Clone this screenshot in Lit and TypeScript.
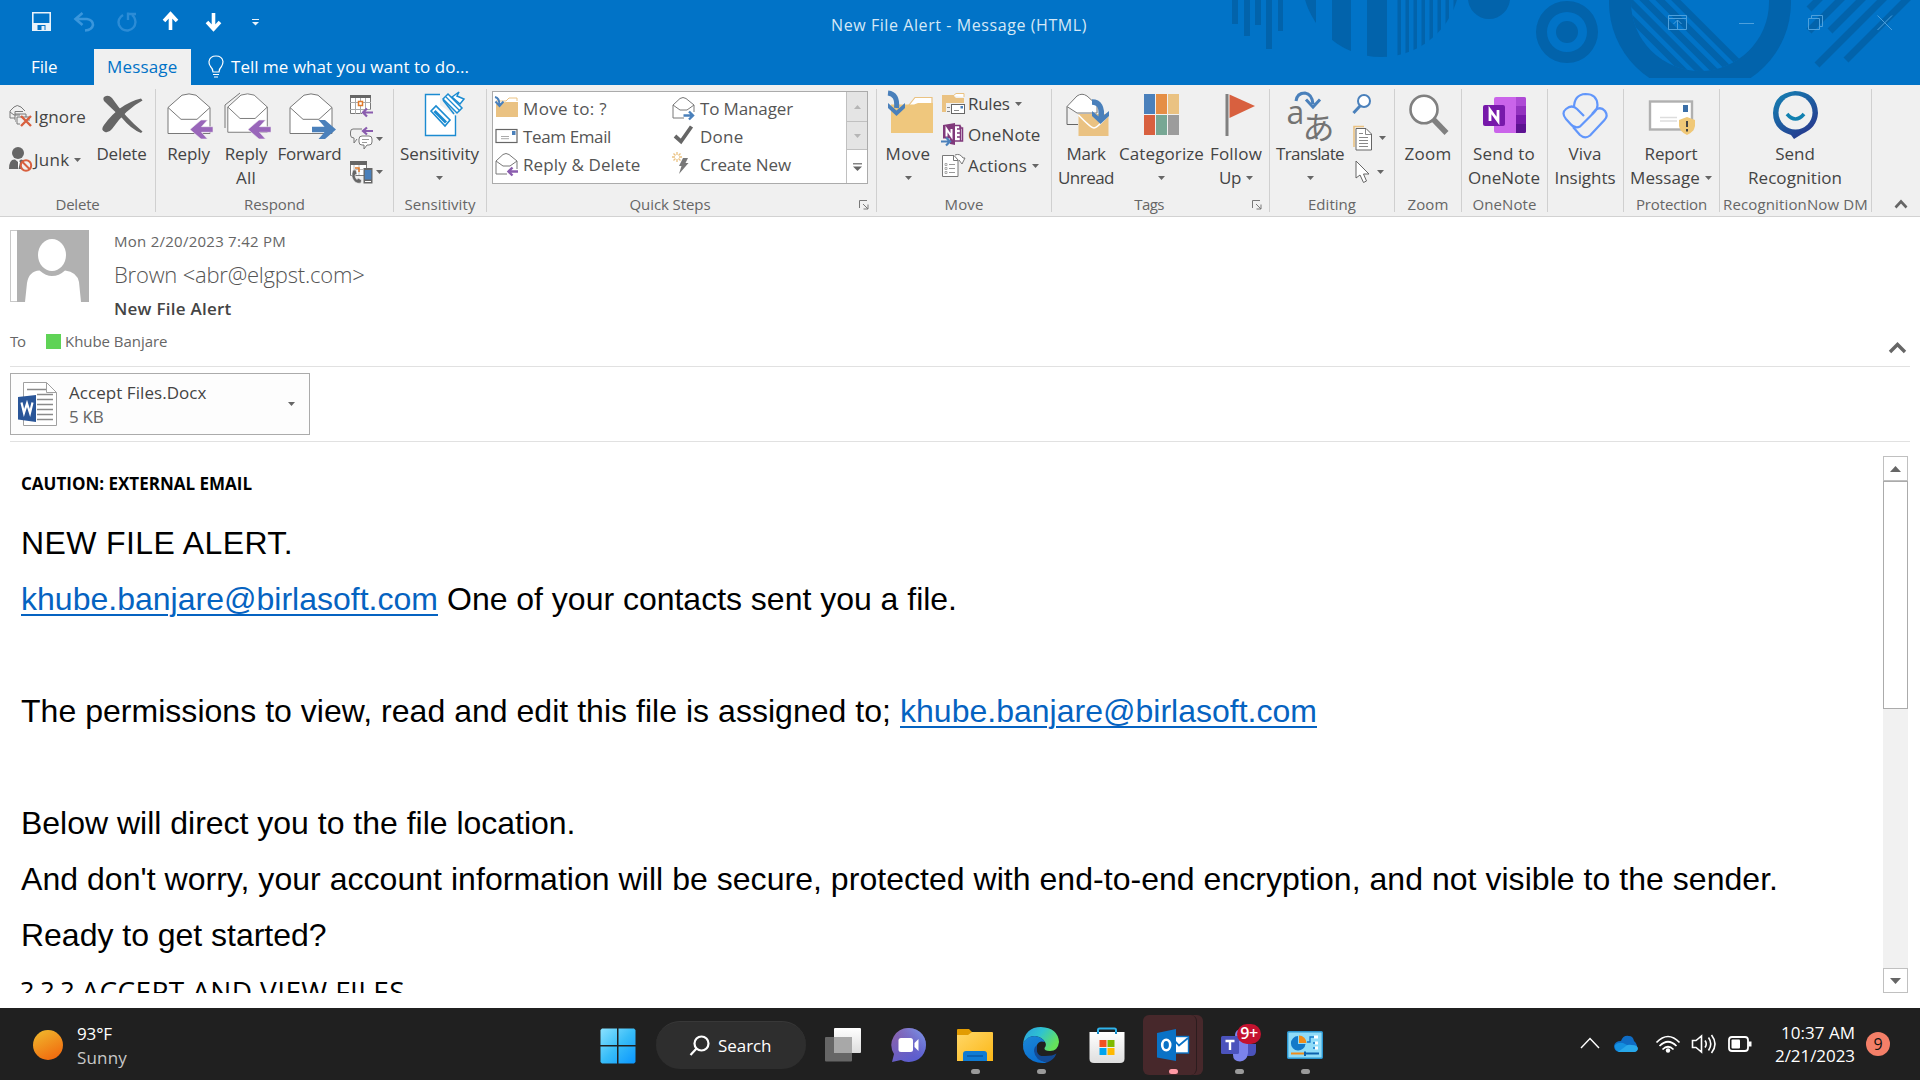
import { LitElement, html, css, svg, TemplateResult } from "lit";
import { customElement, property } from "lit/decorators.js";

/** A single line of text that tracks its letters so the run fills a given width. */
@customElement("text-run")
class TextRun extends LitElement {
  @property({ type: Number }) w = 0;
  static styles = css`
    :host { display: inline-block; white-space: pre; flex: none; text-decoration: inherit; text-decoration-thickness: inherit; }
    .run { display: inline-block; text-decoration: inherit; text-decoration-thickness: inherit; }
  `;
  render() {
    return html`<span class="run"><slot></slot></span>`;
  }
  updated() {
    const run = this.renderRoot.querySelector(".run") as HTMLElement;
    const n = (this.textContent || "").length;
    if (!this.w || !n) return;
    run.style.letterSpacing = "0px";
    const natural = run.getBoundingClientRect().width;
    run.style.letterSpacing = `${(this.w - natural) / n}px`;
  }
}

const t = (text: string, w: number) => html`<text-run .w=${w}>${text}</text-run>`;
const ic = (w: number, h: number, body: TemplateResult) =>
  html`<svg class="ic" width=${w} height=${h} viewBox="0 0 ${w} ${h}" fill="none">${body}</svg>`;
const caret = html`<svg class="ic caret" width="7" height="4" viewBox="0 0 7 4"><path d="M0 0H7L3.5 4Z" fill="#666" /></svg>`;

const P = "#9966ba", B = "#4a80bb", G = "#787878", TAN = "#eac282", RED = "#d8603f";

const envelope = svg`
  <path d="M3 15.5V41.5H45V15.5L31 3.2Q24 .6 17 3.2Z" fill="#fff" stroke="#787878"/>
  <path d="M3 15.5L16 27.3H32L45 15.5" stroke="#787878"/>`;
const leftArrow = svg`<path d="M25 37.5L36 28H42.5L36.5 34.7H48V40.3H36.5L42.5 47H36Z" fill=${P} stroke="#f0f0f0" stroke-width=".6"/>`;
const rightArrow = svg`<path d="M50 37.5L39 28H32.5L38.5 34.7H26V40.3H38.5L32.5 47H39Z" fill=${B}/>`;

const I = {
  ignore: ic(24, 26, svg`<path d="M1 14V7L5 3Q8 0 12 3L16 7M1 8L5 11H11M6 16V7.500H14M1 14H6M6 10H17V13M7 17H6M11 20H8V13H20V17" stroke="#787878"/>
    <path d="M12 12L22 22M22 12L12 22" stroke=${RED} stroke-width="2.400"/>`),
  junk: ic(24, 26, svg`<circle cx="9" cy="6" r="6" fill="#666"/><path d="M0 22Q0 12 6 12.500L9 15L12 12.500Q16 13 17 16V22Z" fill="#666"/><path d="M9 13L11 15L9.500 22H9Z" fill="#fff"/>
    <circle cx="17" cy="18.500" r="5.200" fill="#f0f0f0" stroke=${RED} stroke-width="2"/><path d="M13.500 15L20.500 22" stroke=${RED} stroke-width="2"/>`),
  x: ic(48, 48, svg`<path d="M6 9Q4 5 8 4Q11 3 14 6Q27 25 44.500 39.500L43 41Q33 37 24 26Q13 16 6 9Z" fill="#666"/>
    <path d="M44.500 8.500Q28 17 14 37Q11 41 7 40Q2 38 6 33Q21 12 43 6.500Z" fill="#666"/>`),
  reply: ic(48, 48, svg`${envelope}${leftArrow}`),
  replyAll: ic(48, 48, svg`<path d="M2 36V13L17 1" stroke="#787878"/><g transform="translate(2 0) scale(.94 .97)">${envelope}</g>${leftArrow}`),
  forward: ic(48, 48, svg`<g transform="translate(1 0)">${envelope}</g>${rightArrow}`),
  meeting: ic(24, 24, svg`<path d="M.5 3.500H20.500V19.500H.5Z" fill="#fff" stroke="#787878"/><path d="M0 1H21V4H0Z" fill="#666"/><path d="M5.500 4V20M15.500 4V20M0 8.500H21M0 15.500H21M10.500 4V20" stroke="#aaa"/>
    <path d="M12 16H24V24H12Z" fill="#f0f0f0"/><rect x="8.500" y="7.500" width="4" height="4" fill="#fff" stroke="#e07b2c" stroke-width="1.500"/><path d="M23 18.500H13M17 14.500L13 18.500L17 22.500" stroke="#8a5cae" stroke-width="2.200"/>`),
  im: ic(24, 24, svg`<path d="M12 2H3Q.5 2 .5 5V8Q.5 11 4 11V16L7 12" stroke="#787878"/><path d="M12 9H19Q22 9 22 12V15Q22 18 19 18H17L14 22V18H12Q9 18 9 15V12Q9 9 12 9Z" fill="#fff" stroke="#787878"/>
    <path d="M12 12.500H19M12 15.500H17" stroke="#999"/><path d="M23 4H13.500M17 .5L13 4L17 7.500" stroke="#8a5cae" stroke-width="2.200"/>`),
  more: ic(24, 24, svg`<path d="M.5 3.500H16.500V15.500H.5Z" fill="#fff" stroke="#787878"/><path d="M0 1H17V5H0Z" fill="#666"/><path d="M4 9.500H13M4 5V15M9 5V15" stroke="#bbb"/><path d="M5 8H9V12" stroke="#e07b2c" stroke-width="1.500"/>
    <path d="M3 10Q0 17 5 22Q8 24 11 23L11.500 20L8 18L7 19.500Q5 18 5 15L7 14L6 10Z" fill="#666" stroke="#f0f0f0" stroke-width=".6"/><rect x="13.500" y="8" width="9" height="15.500" fill="#666"/><rect x="14.800" y="10" width="6.500" height="9.500" fill=${B}/><path d="M15 21.500H21" stroke="#fff"/>`),
  sens: ic(48, 48, svg`<path d="M9.500 2.500H39.500V43.500H9.500Z" fill="#fff" stroke="#1b8bd1" stroke-width="1.400"/><path d="M24 0H50V26L38 23L24 13Z" fill="#f0f0f0"/>
    <path d="M15 19L20 14L34 28L29 34Z" fill="#fff" stroke="#1b8bd1" stroke-width="1.600"/><path d="M18.500 19L30 30.500" stroke="#1b8bd1" stroke-width="3"/>
    <path d="M27 7L32 2L46 16L41 21Z" fill="#fff" stroke="#1b8bd1" stroke-width="1.500"/><path d="M30 5L44 19" stroke="#1b8bd1" stroke-width="1.200"/><path d="M36 5L43 0L41 4L48 7L44 12Z" fill="#fff" stroke="#1b8bd1" stroke-width="1.500"/><path d="M27 8L38 22" stroke="#1b8bd1" stroke-width="1.500"/>`),
  qMove: ic(24, 24, svg`<path d="M1 5H11L14 2H22V5" fill="#fff" stroke=${TAN}/><path d="M1 8L11 6H23V21H1Z" fill=${TAN}/><path d="M0 1Q4.500 2 4.500 9M.5 5.500L4.500 10L8.500 5.500" stroke=${B} stroke-width="2"/>`),
  qTeam: ic(24, 24, svg`<rect x="1" y="5.500" width="21" height="13" fill="#fff" stroke="#666" stroke-width="1.200"/><rect x="17" y="7" width="3.500" height="4" fill=${B}/><path d="M6 12.500H14M6 14.700H14" stroke="#aaa"/>`),
  qReply: ic(24, 24, svg`<path d="M12 22H1V9L8 2.500Q11 .5 14 2.500L22 9V17" fill="#fff" stroke="#787878"/><path d="M1 9L8 14H15L22 9" stroke="#787878"/><path d="M23 19.500H13.500M17.500 15.500L13.500 19.500L17.500 23.500" stroke="#8a5cae" stroke-width="2.400"/>`),
  qMgr: ic(24, 24, svg`<path d="M12 22H1V9L8 2.500Q11 .5 14 2.500L22 9V16" fill="#fff" stroke="#787878"/><path d="M1 9L8 14H15L22 9" stroke="#787878"/><path d="M11.500 19.500H21M17 15.500L21 19.500L17 23.500" stroke=${B} stroke-width="2.400"/>`),
  qDone: ic(24, 24, svg`<path d="M3 12L9 17.500L19.500 2.500" stroke="#666" stroke-width="3.800"/>`),
  qNew: ic(24, 24, svg`<path d="M11 6H16L13.500 11H16.500L7 22L9.500 14H7Z" fill="#787878"/><path d="M5 0V3M5 7V10M0 5H3M7 5H10M1.500 1.500L3.500 3.500M6.500 6.500L8.500 8.500M8.500 1.500L6.500 3.500M3.500 6.500L1.500 8.500" stroke=${TAN} stroke-width="1.300"/>`),
  move: ic(48, 48, svg`<path d="M24 13L30 5.500H47V18H20Z" fill="#fff" stroke=${TAN} stroke-width="1.200"/><path d="M6 12.500H29L33 11H48V41H6Z" fill="#efc77d"/><path d="M3 1Q13 2 11.500 16" stroke=${B} stroke-width="5"/><path d="M3 11V16L11.500 24L20 16V11L11.500 18.500Z" fill=${B}/>`),
  rules: ic(24, 24, svg`<path d="M11 4L14 1.500H22V5" fill="#fff" stroke=${TAN}/><path d="M0 3H11L14 6H22V20H0Z" fill=${TAN}/><rect x="4" y="11" width="19" height="11" fill="#f0f0f0"/><rect x="9.500" y="12.500" width="13" height="9" fill="#fff" stroke="#666"/><rect x="18.500" y="14" width="2.500" height="2.500" fill=${B}/><path d="M12 18.500H17M5 15.500H8M5 19.500H8" stroke="#888"/>`),
  onenote: ic(24, 24, svg`<path d="M12 2.500H18V5H20.500V18H12" fill="#fff" stroke="#80397b" stroke-width="1.500"/><path d="M15 6H18M15 10H18M15 14H18M18.500 3V18" stroke="#80397b" stroke-width="1.500"/><path d="M1 2L13 0V22L1 19.500Z" fill="#80397b"/><path d="M4.500 13.500V6L9.500 13.500V6" stroke="#fff" stroke-width="2"/><path d="M0 15.500H8V24H0Z" fill="#f0f0f0"/><path d="M-1 18.500H7M4 14.500L8 18.500L4 22.500" stroke=${B} stroke-width="2.200"/>`),
  actions: ic(24, 24, svg`<path d="M13 1Q18-1 21 4L23 4L20 10L17 6" stroke="#787878" fill="#fff"/><path d="M.5 1.500H12L16 6V22.500H.5Z" fill="#fff" stroke="#787878"/><path d="M11.500 2V6.500H16" stroke="#787878"/><path d="M7 10.500H13M7 14.500H13M7 18.500H13" stroke="#999"/><path d="M3 9.500H5V11.500H3ZM3 13.500H5V15.500H3ZM3 17.500H5V19.500H3Z" stroke="#999" stroke-width=".8"/>`),
  unread: ic(48, 48, svg`<path d="M4 14.500V32.500H15" stroke="#666"/><path d="M4 14.500L14 4Q19 .5 24 4L34 13V21L24 21H14Z" fill="#fff" stroke="#787878"/><path d="M15.500 22H45.500V44H15.500Z" fill=${TAN}/><path d="M15.500 23Q28 36 31 36Q34 36 45.500 23" stroke="#fff" stroke-width="1.600"/>
    <path d="M29 10Q40 10 38 26" stroke=${B} stroke-width="5.500"/><path d="M29 19V24L37.500 32L46 24V19L37.500 26Z" fill=${B}/>`),
  categorize: ic(48, 48, svg`<path d="M6 2H17V22H6Z" fill=${B}/><path d="M18 2H29V22H18Z" fill="#e58e45"/><path d="M30 2H41V22H30Z" fill=${TAN}/><path d="M6 23H17V43H6Z" fill=${RED}/><path d="M18 23H29V43H18Z" fill="#77a794"/><path d="M30 23H41V43H30Z" fill="#9c9c9c"/>`),
  flag: ic(48, 48, svg`<path d="M12.500 2H15.500V44H12.500Z" fill="#808080"/><path d="M16.500 2.500L42 14L16.500 26Z" fill=${RED}/>`),
  zoom: ic(48, 48, svg`<path d="M28 27L41.500 41" stroke="#808080" stroke-width="5.500"/><ellipse cx="19" cy="17.500" rx="13.500" ry="13.800" fill="#fff" stroke="#808080" stroke-width="2.600"/>`),
  sendOn: ic(48, 48, svg`<rect x="13" y="5" width="32" height="36" rx="2" fill="#ca64ea"/><path d="M35 5H43Q45 5 45 7V14H35Z" fill="#ae4bd5"/><path d="M35 14H45V23H35Z" fill="#9332bf"/><path d="M35 23H45V39Q45 41 43 41H35Z" fill="#7719aa"/><path d="M35 32H45V39Q45 41 43 41H35Z" fill="#5c1290"/>
    <rect x="2" y="13" width="22" height="21" rx="2" fill="#7719aa"/><path d="M9 29V18L17 29V18" stroke="#fff" stroke-width="2.800"/>`),
  viva: ic(48, 48, svg`<g stroke="#6196fb" stroke-width="2.200" stroke-linejoin="round"><path d="M12 16Q12 2.500 23.500 2Q35 2 35.500 13Q35.500 17 32.500 20L18 34.500Q13 37 8.500 32L4 27Q-1 21 4 17Q10 12 15 17L22 24"/><path d="M30 22L33.500 18Q38.500 14 43 19Q46.500 24 42.500 28L28 43.500Q23 47.500 18 43L11 35"/></g>`),
  report: ic(48, 48, svg`<rect x="2" y="9.500" width="42" height="28" fill="#fff" stroke="#b0b0b0" stroke-width="2.400"/><rect x="35" y="13" width="5" height="7" fill="#3b6fa8"/><path d="M12 25.500H29M12 29H29" stroke="#ddd" stroke-width="1.500"/><path d="M39 25L47 28V34Q46 40 39 43Q32 40 31 34V28Z" fill="#f0c877"/><path d="M39 29V35M39 37V39.500" stroke="#444" stroke-width="2"/>`),
  recog: ic(48, 48, svg`<defs><linearGradient id="rg" x1="0" y1="0" x2=".7" y2="1"><stop offset="0" stop-color="#1384b5"/><stop offset="1" stop-color="#27388d"/></linearGradient></defs>
    <path d="M19 43Q1 38 1 21Q2 1 23 -1Q45 0 46 21Q45 36 30 42L22 47Z" fill="url(#rg)"/><circle cx="23.500" cy="20.500" r="17" fill="#f0f0f0"/><path d="M15 22Q23.500 32 32 22" stroke="#1180b0" stroke-width="3.600"/>`),
  find: ic(20, 22, svg`<circle cx="12" cy="8" r="6" fill="#fff" stroke=${B} stroke-width="2"/><path d="M8 13L1.500 20" stroke=${B} stroke-width="3"/>`),
  related: ic(22, 26, svg`<path d="M2 22V1.500H12" stroke=${TAN} stroke-width="1.600"/><path d="M4 3.500H14L19.500 9V25H4Z" fill="#fff" stroke="#666"/><path d="M13.500 4V9.500H19M7 8.500H11M7 12.500H16M7 15.500H16M7 18.500H16M7 21.500H16" stroke="#888"/>`),
  select: ic(20, 24, svg`<path d="M4 1V18L8 15L11.500 22.500L14.500 21L11.500 14H17Z" fill="#fff" stroke="#666"/>`),
};

interface Big { icon: TemplateResult; a: [string, number]; b?: [string, number]; drop?: boolean; cls: string; }
const big = (o: Big) => html`<div class="big ${o.cls}">
  <div class="bicon">${o.icon}</div>
  <div class="line">${t(...o.a)}</div>
  <div class="line">${o.b ? t(...o.b) : ""}${o.drop ? caret : ""}</div></div>`;
const small = (icon: TemplateResult, label?: [string, number], drop = false) =>
  html`<div class="small">${icon}${label ? t(...label) : ""}${drop ? caret : ""}</div>`;
const launcher = html`<svg class="ic launch" width="10" height="10" viewBox="0 0 10 10" fill="none"><path d="M.5 8V.5H8M4 4L9 9M9 4.500V9H4.500" stroke="#787878"/></svg>`;
const group = (cls: string, body: TemplateResult, label?: [string, number], launch = false) => html`<section class="group ${cls}">
  <div class="body">${body}</div>
  <div class="glabel"><span class="gtext">${label ? t(...label) : ""}</span>${launch ? launcher : ""}</div></section>`;

const quick: [TemplateResult, string, number][] = [
  [I.qMove, "Move to: ?", 84], [I.qMgr, "To Manager", 93],
  [I.qTeam, "Team Email", 88], [I.qDone, "Done", 43.5],
  [I.qReply, "Reply & Delete", 117.5], [I.qNew, "Create New", 91],
];

const task = {
  start: ic(36, 36, svg`<defs><linearGradient id="wn" x1="0" y1="0" x2="1" y2="1"><stop offset="0" stop-color="#8ae2ff"/><stop offset=".5" stop-color="#38bdf8"/><stop offset="1" stop-color="#0a96ff"/></linearGradient></defs>
    <path d="M2 .5H17V17H.5V2ZM18.500 .5H34L35.500 2V17H18.500ZM.5 18.500H17V35.500H2L.5 34ZM18.500 18.500H35.500V34L34 35.500H18.500Z" fill="url(#wn)"/>`),
  search: ic(22, 22, svg`<circle cx="12.500" cy="8.500" r="7" stroke="#fff" stroke-width="2.200"/><path d="M7.500 13.500L1.500 20" stroke="#fff" stroke-width="2.200"/>`),
  view: ic(36, 36, svg`<defs><linearGradient id="tv" x1="0" y1="0" x2="0" y2="1"><stop offset="0" stop-color="#fff"/><stop offset="1" stop-color="#ddd"/></linearGradient></defs><rect x="9" y="1" width="27" height="25" rx="1" fill="url(#tv)"/><rect x="0" y="10" width="27" height="24.500" rx="1" fill="#666"/><rect x="9" y="10" width="18" height="16" fill="#a8a8a8"/>`),
  chat: ic(36, 36, svg`<defs><linearGradient id="ch" x1="0" y1="0" x2=".6" y2="1"><stop offset="0" stop-color="#9163a6"/><stop offset="1" stop-color="#5a5dd0"/></linearGradient><linearGradient id="ch2" x1="1" y1="0" x2=".4" y2=".6"><stop offset="0" stop-color="#7ea4f0"/><stop offset="1" stop-color="#6a6fd8" stop-opacity="0"/></linearGradient></defs>
    <path d="M18 1A17 17 0 1 1 10 33L1 35L3 27A17 17 0 0 1 18 1Z" fill="url(#ch)"/><path d="M18 1A17 17 0 1 1 10 33A17 17 0 0 1 18 1Z" fill="url(#ch2)"/><rect x="7.500" y="11" width="14.500" height="14" rx="2.500" fill="#fff"/><path d="M23.500 16L27.500 12V24L23.500 20Z" fill="#fff"/>`),
  files: ic(36, 36, svg`<defs><linearGradient id="fe" x1="0" y1="0" x2="1" y2="1"><stop offset="0" stop-color="#ffd768"/><stop offset="1" stop-color="#fcb716"/></linearGradient></defs><path d="M0 3Q0 2 1 2H12L15 5H20V9H0Z" fill="#e29c02"/><path d="M0 8H11L15 5H35Q36 5 36 6V34H0Z" fill="url(#fe)"/><path d="M6 34V27Q6 24 9 24H27Q30 24 30 27V34Z" fill="#0f7bd4"/><path d="M10 29H26" stroke="#0a58a6" stroke-width="1.500"/>`),
  edge: ic(36, 36, svg`<defs><linearGradient id="e1" x1="0" y1="0" x2="1" y2=".5"><stop offset="0" stop-color="#2a9de0"/><stop offset=".5" stop-color="#2fc3d0"/><stop offset="1" stop-color="#65e25a"/></linearGradient><linearGradient id="e2" x1="0" y1="0" x2=".5" y2="1"><stop offset="0" stop-color="#1b87d6"/><stop offset="1" stop-color="#0b6fd0"/></linearGradient></defs>
    <path d="M0 17Q2 0 18 0Q35 1 36 15Q35 24 27 24Q21 24 21.500 21Q24 18 22 15Q19 10 12 9Q4 9 0 17Z" fill="url(#e1)"/><path d="M0 17Q3 9 12 9Q19 10 22 15Q16 13 14 18Q11 32 24 35.500Q17 37 10 34Q-1 28 0 17Z" fill="url(#e2)"/><path d="M14 18Q12 30 22 29Q30 29 33.500 26.500Q31 33 24 35.500Q12 34 11 24Q11 20 14 18Z" fill="#134a94"/>`),
  store: ic(36, 36, svg`<defs><linearGradient id="st" x1="0" y1="0" x2="0" y2="1"><stop offset="0" stop-color="#fff"/><stop offset="1" stop-color="#dedede"/></linearGradient></defs><path d="M9 7V3Q9 1.500 10.500 1.500H25.500Q27 1.500 27 3V7" stroke="#2fb4ec" stroke-width="2"/><path d="M.5 5H35.500V32Q35.500 36 31 36H5Q.5 36 .5 32Z" fill="url(#st)"/><path d="M9 7V5M27 7V5" stroke="#1389c9" stroke-width="2"/><path d="M10.500 13H17.500V20H10.500Z" fill="#f25022"/><path d="M18.500 13H25.500V20H18.500Z" fill="#7fba00"/><path d="M10.500 21H17.500V28H10.500Z" fill="#00a4ef"/><path d="M18.500 21H25.500V28H18.500Z" fill="#ffb900"/>`),
  outlook: ic(36, 36, svg`<rect x="17" y="9.500" width="16.500" height="16.500" fill="#fff" stroke="#0a72c6" stroke-width="1.400"/><path d="M19 13L24 18.500L33 11" stroke="#0a72c6" stroke-width="1.800"/><path d="M2 6L21 2V34L2 30.500Z" fill="#0a72c6"/><ellipse cx="11.200" cy="18" rx="4" ry="5.300" stroke="#fff" stroke-width="2.600"/>`),
  teams: ic(36, 36, svg`<path d="M24 17H35V24Q35 29 30 29H24Z" fill="#4b53bc"/><circle cx="20" cy="8" r="6" fill="#7b83eb"/><path d="M12 14H27V26Q26 34 19 34.500Q12 34 12 28Z" fill="#7b83eb"/><rect x="0" y="9" width="18" height="18" rx="1.500" fill="#4b53bc"/><path d="M4.500 14H13.500M9 14V23" stroke="#fff" stroke-width="2.400"/>`),
  panel: ic(36, 36, svg`<rect x=".7" y="4.700" width="34.600" height="26.600" rx="1" fill="#8fdcf8" stroke="#2b95cf" stroke-width="1.400"/><path d="M11 9A7.300 7.300 0 1 0 18.500 17H11Z" fill="#1379c9"/><path d="M12 8.500A7.500 7.500 0 0 1 19.500 16H12Z" fill="#f08c1a"/><path d="M20 15H23V10H28M26 16H31M26 21H31" stroke="#1379c9" stroke-width="1.300"/><path d="M27 10H31M28 16H31M28 21H31" stroke="#fff" stroke-width="3"/><path d="M4 26.500H18" stroke="#f08c1a" stroke-width="2"/><path d="M18 26.500H32M18 24.500V29" stroke="#0d62ad" stroke-width="2"/>`),
};

@customElement("app-root")
class AppRoot extends LitElement {
  static styles = css`
    :host { display: block; width: 1920px; height: 1080px; overflow: hidden; background: #fff; font-family: "Open Sans", "Noto Sans", sans-serif; color: #444; }
    * { box-sizing: border-box; }
    .app { display: flex; flex-direction: column; height: 1080px; }
    .ic { display: block; flex: none; overflow: visible; }
    .top { position: relative; height: 85px; background: #0173c7; color: #fff; flex: none; }
    .pattern { position: absolute; left: 1220px; top: 0; }
    .titlebar { position: relative; height: 49px; display: grid; grid-template-columns: 831px 1fr 288px; }
    .qat { display: flex; padding: 12px 0 0 32px; gap: 22px; }
    .title { font-size: 16px; line-height: 50px; color: #d5e8f6; }
    .win { padding-top: 13px; }
    .tabs { position: relative; height: 36px; display: flex; font-size: 17px; line-height: 35px; }
    .file { width: 94px; padding-left: 31px; }
    .msg { width: 97px; background: #f0f0f0; color: #0173c7; padding-left: 13px; }
    .tell { display: flex; padding-left: 17px; gap: 7px; }
    .tell .ic { margin-top: 6px; }

    .ribbon { height: 132px; flex: none; background: #f0f0f0; border-bottom: 1px solid #d2d2d2; display: flex; font-size: 17px; }
    .group { position: relative; display: flex; flex-direction: column; flex: none; }
    .group::after { content: ""; position: absolute; right: 0; top: 4px; width: 1px; height: 123px; background: #d0d0d0; }
    .body { height: 107px; display: flex; }
    .glabel { display: flex; height: 24px; line-height: 25px; font-size: 15px; color: #666; margin-left: -1px; }
    .gtext { flex: 1; display: flex; justify-content: center; }
    .launch { margin: 8px 8px 0 5px; }
    .big { padding-top: 7px; display: flex; flex-direction: column; align-items: center; flex: none; }
    .bicon { width: 48px; height: 50px; }
    .line { height: 24px; line-height: 24px; display: flex; align-items: center; gap: 5px; white-space: nowrap; margin-left: -1px; }
    .col { display: flex; flex-direction: column; flex: none; }
    .small { display: flex; align-items: center; gap: 3px; }
    .g1 { width: 156px; } .g2 { width: 238px; } .g3 { width: 93px; } .g4 { width: 390px; } .g5 { width: 175px; } .g6 { width: 218px; }
    .g7 { width: 125px; } .g8 { width: 67px; } .g9 { width: 86px; } .g10 { width: 76px; } .g11 { width: 96px; } .g12 { width: 152px; }
    .w48 { width: 48px; } .w66 { width: 66px; } .w49 { width: 49px; } .w78 { width: 78px; } .w92 { width: 92px; } .w63 { width: 63px; }
    .w69 { width: 69px; } .w82 { width: 82px; } .w67 { width: 67px; } .w81 { width: 81px; } .w85 { width: 85px; } .w75 { width: 75px; } .w95 { width: 95px; } .w151 { width: 151px; }
    .c1 { width: 98px; padding: 10px 0 0 9px; } .c1 .small { height: 43px; gap: 1px; } .c1 .caret { margin-left: 3px; }
    .c2 { padding: 4px 0 0 1px; } .c2 .small { height: 33px; gap: 2px; }
    .c5 { padding: 3px 0 0 2px; } .c5 .small { height: 31px; gap: 2px; } .c5 .caret { margin-left: 3px; }
    .c7 { padding: 2px 0 0 1px; } .c7 .small { height: 34px; gap: 5px; }
    .gallery { margin: 6px 0 0 5px; width: 376px; height: 93px; border: 1px solid #ababab; background: #fff; display: flex; color: #555; }
    .items { flex: 1; display: grid; grid-template-columns: 177px 1fr; grid-auto-rows: 28px; padding: 2px 0 0 2px; }
    .items .small { gap: 4px; }
    .steps { width: 21px; display: grid; grid-template-rows: 30px 28px 1fr; border-left: 1px solid #c0c0c0; }
    .step { display: flex; align-items: center; justify-content: center; background: #e4e4e4; border-bottom: 1px solid #c0c0c0; }
    .step:last-child { background: #fff; border: 0; }
    .trans { position: relative; color: #737373; height: 50px; width: 48px; }
    .ta { position: absolute; left: 0; top: 2px; font-size: 32px; line-height: 36px; }
    .tj { position: absolute; left: 16px; top: 17px; font: 32px/32px "Noto Sans CJK JP", sans-serif; }
    .tarrow { position: absolute; left: 0; top: 0; }
    .collapse { margin: 112px 0 0 22px; }

    .head { height: 150px; flex: none; margin: 0 10px; border-bottom: 1px solid #e1e1e1; display: flex; position: relative; }
    .who { width: 104px; padding-top: 13px; flex: none; }
    .to { display: flex; height: 24px; align-items: center; margin-top: 27px; font-size: 15px; color: #666; white-space: nowrap; }
    .green { width: 15px; height: 15px; background: #5fd356; margin: 0 4px 0 21px; flex: none; }
    .meta { flex: 1; display: flex; flex-direction: column; align-items: flex-start; }
    .date { font-size: 15px; line-height: 20px; margin-top: 14px; color: #666; }
    .from { font-size: 22px; line-height: 28px; margin-top: 9px; font-weight: 300; color: #555; }
    .subj { font-size: 17px; line-height: 24px; margin-top: 9px; font-weight: 600; color: #444; }
    .up { margin-top: 125px; width: 21px; }
    .att { height: 75px; flex: none; margin: 0 10px; border-bottom: 1px solid #e1e1e1; padding-top: 6px; }
    .chip { width: 300px; height: 62px; border: 1px solid #ababab; background: #fdfdfd; display: flex; padding: 7px 14px 0 7px; }
    .names { margin-left: 11px; flex: 1; font-size: 17px; line-height: 24px; display: flex; flex-direction: column; }
    .size { color: #666; }
    .chip .caret { margin-top: 21px; }

    .main { height: 566px; flex: none; display: flex; overflow: hidden; padding: 14px 12px 0 21px; color: #000; }
    .mail { flex: 1; font: 32px/56px "Liberation Sans", Arial, sans-serif; height: 537px; overflow: hidden; }
    .caution { font: 700 17px/24px "Open Sans", "Noto Sans", sans-serif; margin: 16px 0 19px; height: 24px; }
    .row { height: 56px; white-space: pre; display: flex; gap: 9px; }
    .row a { color: #0563c1; text-decoration: underline; text-decoration-thickness: 2px; text-underline-offset: 4px; }
    .accept { font: 28px/56px "Open Sans", "Noto Sans", sans-serif; height: 56px; }
    .scroll { width: 25px; height: 537px; background: #f1f1f1; display: flex; flex-direction: column; }
    .sbtn { height: 25px; border: 1px solid #c0c0c0; background: #fff; display: flex; align-items: center; justify-content: center; flex: none; }
    .thumb { height: 228px; border: 1px solid #ababab; background: #fff; flex: none; }
    .fill { flex: 1; }

    .bar { height: 72px; flex: none; background: #202020; color: #fff; display: grid; grid-template-columns: 584px 1fr 350px; font-size: 17px; }
    .weather { display: flex; padding: 14px 0 0 33px; gap: 14px; }
    .weather .ic { margin-top: 8px; }
    .lines { line-height: 24px; display: flex; flex-direction: column; }
    .dim { color: #c8c8c8; }
    .dock { display: flex; }
    .cell { width: 66px; height: 72px; padding-top: 19px; display: flex; flex-direction: column; align-items: center; position: relative; flex: none; }
    .cell.start { padding-top: 19.500px; width: 67px; }
    .tile { position: absolute; left: 3px; top: 7px; width: 60px; height: 60px; border-radius: 6px; background: #47282b; }
    .tile::after { content: ""; position: absolute; right: 6px; top: 0; width: 6px; height: 60px; border-right: 1px solid #2c1c1e; border-radius: 0 6px 6px 0; }
    .cell .ic { position: relative; }
    .dot { width: 9px; height: 5px; border-radius: 3px; background: #9a9a9a; margin-top: 6px; position: relative; }
    .dot.on { background: #ff9aa5; }
    .pill { width: 150px; height: 48px; margin: 13px 4px 0 5px; border-radius: 24px; background: #2e2e2e; border-top: 1px solid #383838; display: flex; align-items: center; padding-left: 33px; gap: 7px; flex: none; }
    .badge { position: absolute; left: 31px; top: 16px; width: 24px; height: 20px; border-radius: 10px; background: #c4122f; font-size: 16px; line-height: 19px; text-align: center; font-weight: 600; letter-spacing: -.5px; }
    .tray { display: flex; padding-left: 10px; }
    .clock { margin-left: 20px; width: 83px; padding-top: 13px; line-height: 23px; display: flex; flex-direction: column; align-items: flex-end; font-size: 17px; }
    .nine { width: 24px; height: 24px; border-radius: 12px; background: #f47f68; color: #111; margin: 24px 0 0 11px; font-size: 16px; line-height: 24px; text-align: center; }
  `;

  pattern() {
    const thin = [1397.5, 1405.500, 1413.500, 1421.500, 1429.500, 1437.500, 1445.500, 1453.500];
    return html`<svg class="pattern ic" width="700" height="85" viewBox="1220 0 700 85" fill="#0263ab">
      <defs><clipPath id="c1"><circle cx="1381" cy="-22" r="79" /></clipPath><clipPath id="c2"><circle cx="1700" cy="2" r="69" /></clipPath><clipPath id="c3"><rect x="1600" y="0" width="200" height="78" /></clipPath></defs>
      <path d="M1232 0h6v24h-6zM1244 0h6v36h-6zM1255 0h6v25h-6zM1266 0h6v49h-6zM1278 0h5v31h-5z" />
      <g clip-path="url(#c1)"><path d="M1300 0h16v30h-16zM1332 0h19v60h-19zM1367 0h20v60h-20z" />${thin.map((x) => svg`<rect x=${x} y="0" width="3.500" height="60"/>`)}</g>
      <circle cx="1489" cy="-2" r="21" />
      <path fill-rule="evenodd" d="M1536 32a31 31 0 1 0 62 0a31 31 0 1 0 -62 0M1547 32a20 20 0 1 1 40 0a20 20 0 1 1 -40 0" /><circle cx="1567" cy="32" r="11" />
      <g clip-path="url(#c3)"><circle cx="1700" cy="2.400" r="91" /><circle cx="1700" cy="2" r="69" fill="#0173c7" />
      <g clip-path="url(#c2)" stroke="#0263ab" stroke-width="6.500">${[1675.7, 1660, 1644, 1628.500, 1613].map((x) => svg`<path d="M${x - 10} -10L${x + 80} 80"/>`)}</g></g>
      <g stroke="#0263ab" stroke-width="7"><path d="M1846 60L1910 -4M1817 65L1886 -4M1830 31L1866 -5M1809 31L1844 -4M1809 9L1822 -4" /></g>
    </svg>`;
  }

  top() {
    return html`<header class="top">${this.pattern()}
      <div class="titlebar"><div class="qat">
        ${ic(20, 20, svg`<path d="M.8 .8H18.200V18.200H.8Z" stroke="#e8f2fa" stroke-width="1.600"/><path d="M.5 11H18.500V18.500H.5Z" fill="#e8f2fa"/><path d="M5.500 13H13.500V18H5.500Z" fill="#0173c7"/><path d="M9.500 14H12.500V18H9.500Z" fill="#e8f2fa"/>`)}
        ${ic(22, 20, svg`<path d="M1 7H13Q19 8 19 13Q18 18 11 18.500M8.500 1L1.500 7L8.500 13" stroke="#3a96dc" stroke-width="2.600"/>`)}
        ${ic(22, 20, svg`<path d="M5 3Q-1 7 1 13Q4 19 10 18.500Q17 17 17.500 10Q17 5 14 3M10 .5V8M10 2H18" stroke="#2c8cd6" stroke-width="2.400"/>`)}
        ${ic(22, 20, svg`<path d="M8.500 18V3M2 9L8.500 2L15 9" stroke="#fff" stroke-width="3.600"/>`)}
        ${ic(22, 20, svg`<path d="M7.500 1V16M1 10L7.500 17L14 10" stroke="#fff" stroke-width="3.600"/>`)}
        ${ic(22, 20, svg`<path d="M2 7.500H9" stroke="#e8f2fa"/><path d="M2 10H9L5.500 13.500Z" fill="#e8f2fa"/>`)}
      </div><div class="title">${t("New File Alert - Message (HTML)", 256)}</div>
      <div class="win">${ic(280, 20, svg`<g stroke="#4da0dc"><path d="M36.500 2.500H54.500V16.500H36.500ZM36.500 5.500H54.500M45.500 16V7M41.500 11L45.500 7L49.500 11M107 10.500H122M176.500 5.500H187.500V16.500H176.500ZM179.500 5V2.500H190.500V13.500H188M245.500 2.500L260 17M260 2.500L245.500 17"/></g>`)}</div></div>
      <div class="tabs"><div class="file">${t("File", 26.5)}</div><div class="msg">${t("Message", 70.500)}</div>
      <div class="tell">${ic(16, 24, svg`<path d="M5 17Q5 14 2.500 11.500Q.7 9 1 6.500Q2 1 8 1Q14 1 15 6.500Q15 9 13.500 11.500Q11 14 11 17ZM5 19.500H11M6 22H10" stroke="#fff" stroke-width="1.200"/>`)}${t("Tell me what you want to do...", 238)}</div></div>
    </header>`;
  }

  ribbon() {
    const tri = (c: string, up = false) => html`<svg class="ic" width="7" height="4" viewBox="0 0 7 4"><path d=${up ? "M0 4H7L3.5 0Z" : "M0 0H7L3.5 4Z"} fill=${c} /></svg>`;
    const translate = html`<div class="trans"><span class="ta">a</span><span class="tj">あ</span><svg class="ic tarrow" width="48" height="24" viewBox="0 0 48 24" fill="none"><path d="M9 9Q10 1 18 1Q25 2 26 12M19 7.500L26 15L33 7.500" stroke=${B} stroke-width="3"/></svg></div>`;
    return html`<nav class="ribbon">
      ${group("g1", html`<div class="col c1">${small(I.ignore, ["Ignore", 52])}${small(I.junk, ["Junk", 35.500], true)}</div>${big({ icon: I.x, a: ["Delete", 50], cls: "w48" })}`, ["Delete", 44])}
      ${group("g2", html`${big({ icon: I.reply, a: ["Reply", 42.500], cls: "w66" })}${big({ icon: I.replyAll, a: ["Reply", 42.500], b: ["All", 20], cls: "w49" })}${big({ icon: I.forward, a: ["Forward", 64], cls: "w78" })}
        <div class="col c2">${small(I.meeting)}${small(I.im, undefined, true)}${small(I.more, undefined, true)}</div>`, ["Respond", 61])}
      ${group("g3", big({ icon: I.sens, a: ["Sensitivity", 79], drop: true, cls: "w92" }), ["Sensitivity", 71])}
      ${group("g4", html`<div class="gallery"><div class="items">${quick.map(([i, l, w]) => small(i, [l, w]))}</div>
        <div class="steps"><div class="step">${tri("#b5b5b5", true)}</div><div class="step">${tri("#b5b5b5")}</div><div class="step">${ic(9, 8, svg`<path d="M0 .8H9" stroke="#666" stroke-width="1.200"/><path d="M0 3.500H9L4.500 8Z" fill="#666"/>`)}</div></div></div>`, ["Quick Steps", 81], true)}
      ${group("g5", html`${big({ icon: I.move, a: ["Move", 45], drop: true, cls: "w63" })}<div class="col c5">${small(I.rules, ["Rules", 41.5], true)}${small(I.onenote, ["OneNote", 72.5])}${small(I.actions, ["Actions", 59], true)}</div>`, ["Move", 39])}
      ${group("g6", html`${big({ icon: I.unread, a: ["Mark", 39], b: ["Unread", 56], cls: "w69" })}${big({ icon: I.categorize, a: ["Categorize", 85], drop: true, cls: "w82" })}${big({ icon: I.flag, a: ["Follow", 52], b: ["Up", 22], drop: true, cls: "w67" })}`, ["Tags", 29.500], true)}
      ${group("g7", html`${big({ icon: translate, a: ["Translate", 68], drop: true, cls: "w81" })}<div class="col c7">${small(I.find)}${small(I.related, undefined, true)}${small(I.select, undefined, true)}</div>`, ["Editing", 48])}
      ${group("g8", big({ icon: I.zoom, a: ["Zoom", 47], cls: "w67" }), ["Zoom", 41])}
      ${group("g9", big({ icon: I.sendOn, a: ["Send to", 62], b: ["OneNote", 72], cls: "w85" }), ["OneNote", 64])}
      ${group("g10", big({ icon: I.viva, a: ["Viva", 33], b: ["Insights", 61], cls: "w75" }))}
      ${group("g11", big({ icon: I.report, a: ["Report", 53], b: ["Message", 70], drop: true, cls: "w95" }), ["Protection", 71])}
      ${group("g12", big({ icon: I.recog, a: ["Send", 39.500], b: ["Recognition", 94], cls: "w151" }), ["RecognitionNow DM", 145])}
      <div class="collapse">${ic(14, 14, svg`<path d="M1.500 10.500L7 4.500L12.500 10.500" stroke="#666" stroke-width="2.600"/>`)}</div>
    </nav>`;
  }

  message() {
    return html`<section class="head"><div class="who">
      ${ic(80, 72, svg`<rect x=".5" y=".5" width="20" height="71" stroke="#c8c8c8"/><rect x="7" y="0" width="72" height="72" fill="#b1b1b1"/><ellipse cx="42" cy="25" rx="14" ry="16" fill="#fff"/><path d="M15 72L17 53Q19 41 29.500 40.500Q36 46 42 46Q49 46 55 40.500Q67 42 69 52L71 72Z" fill="#fff"/>`)}
      <div class="to">${t("To", 15)}<span class="green"></span>${t("Khube Banjare", 102.500)}</div></div>
      <div class="meta"><div class="date">${t("Mon 2/20/2023 7:42 PM", 172)}</div><div class="from">${t("Brown <abr@elgpst.com>", 250.5)}</div><div class="subj">${t("New File Alert", 117.500)}</div></div>
      <div class="up">${ic(17, 12, svg`<path d="M1 10L8.500 2.500L16 10" stroke="#666" stroke-width="3.400"/>`)}</div></section>
    <section class="att"><div class="chip">${ic(40, 46, svg`<path d="M5.500 1.500H28.500L38.500 11.500V44.500H5.500Z" fill="#fff" stroke="#a0a0a0"/><path d="M28.500 1.500V11.500H38.500" stroke="#a0a0a0"/><path d="M9 8.500H28M19 13.500H35M19 18.500H35M19 23.500H35M19 28.500H35M19 33.500H35M19 38.500H35" stroke="#8a8a8a" stroke-width="1.600"/><path d="M0 16L18 14V41L0 38.500Z" fill="#2a5699"/><path d="M3.500 21.500L6 32L9 22.500L12 32L14.500 21.500" stroke="#fff" stroke-width="2.200"/>`)}
      <div class="names">${t("Accept Files.Docx", 137.500)}<span class="size">${t("5 KB", 34.500)}</span></div>${caret}</div></section>
    <main class="main"><article class="mail">
      <div class="caution">${t("CAUTION: EXTERNAL EMAIL", 231)}</div>
      <div class="row">${t("NEW FILE ALERT.", 272)}</div>
      <div class="row"><a>${t("khube.banjare@birlasoft.com", 417)}</a>${t("One of your contacts sent you a file.", 510)}</div>
      <div class="row"></div>
      <div class="row">${t("The permissions to view, read and edit this file is assigned to;", 870)}<a>${t("khube.banjare@birlasoft.com", 417)}</a></div>
      <div class="row"></div>
      <div class="row">${t("Below will direct you to the file location.", 554.5)}</div>
      <div class="row">${t("And don't worry, your account information will be secure, protected with end-to-end encryption, and not visible to the sender.", 1757)}</div>
      <div class="row">${t("Ready to get started?", 305.5)}</div>
      <div class="accept">${t("? ? ? ACCEPT AND VIEW FILES", 384)}</div>
    </article><div class="scroll"><div class="sbtn">${ic(11, 6, svg`<path d="M0 6H11L5.500 0Z" fill="#666"/>`)}</div><div class="thumb"></div><div class="fill"></div><div class="sbtn">${ic(11, 6, svg`<path d="M0 0H11L5.500 6Z" fill="#666"/>`)}</div></div></main>`;
  }

  bar() {
    const dot = html`<span class="dot"></span>`;
    return html`<footer class="bar">
      <div class="weather">${ic(30, 30, svg`<defs><linearGradient id="sun" x1=".2" y1="0" x2=".7" y2="1"><stop offset="0" stop-color="#f0b62c"/><stop offset="1" stop-color="#f1690e"/></linearGradient></defs><circle cx="15" cy="15" r="15" fill="url(#sun)"/>`)}
        <div class="lines">${t("93°F", 35)}<span class="dim">${t("Sunny", 50)}</span></div></div>
      <div class="dock"><div class="cell start">${task.start}</div><div class="pill">${task.search}${t("Search", 53.500)}</div>
        <div class="cell">${task.view}</div><div class="cell">${task.chat}</div><div class="cell">${task.files}${dot}</div><div class="cell">${task.edge}${dot}</div><div class="cell">${task.store}</div>
        <div class="cell"><span class="tile"></span>${task.outlook}<span class="dot on"></span></div>
        <div class="cell">${task.teams}${dot}<span class="badge">9+</span></div><div class="cell">${task.panel}${dot}</div></div>
      <div class="tray">${ic(172, 72, svg`<path d="M1 40L10 30.500L19 40" stroke="#fff" stroke-width="1.400"/>
        <path d="M39 44Q34 43 34 38Q35 33 41 33Q43 27 49 28Q53 28 54 33Q58 36 57 43Z" fill="#0f6cc4"/><path d="M39 44Q34 42 35 37Q38 34 43 35L57 42Q56 44 54 44Z" fill="#1490df"/><path d="M38 44L46 38Q48 36 52 37Q58 37 58 41Q57 44 54 44Z" fill="#28a8ea"/>
        <g stroke="#fff" stroke-width="1.700"><path d="M76.500 34.500Q88 22.500 99.500 34.500M79.500 38Q88 29.500 96.500 38M82.500 41.500Q88 36 93.500 41.500" /></g><circle cx="88" cy="42.500" r="2.200" fill="#fff"/>
        <path d="M112.500 32.500H116L121.500 28V44L116 39.500H112.500ZM125 32.500Q127.500 36 125 39.500M128.500 29.500Q133 36 128.500 42.500M131.500 27Q138.500 36 131.500 45" stroke="#fff" stroke-width="1.600"/>
        <rect x="149" y="29" width="19" height="14" rx="3" stroke="#fff" stroke-width="1.800"/><rect x="151.500" y="31.500" width="8.500" height="9" rx="1" fill="#fff"/><path d="M170 33.500V38.500" stroke="#fff" stroke-width="3"/>`)}
        <div class="clock">${t("10:37 AM", 74)}${t("2/21/2023", 80)}</div><div class="nine">9</div></div>
    </footer>`;
  }

  render() {
    return html`<div class="app">${this.top()}${this.ribbon()}${this.message()}${this.bar()}</div>`;
  }
}
